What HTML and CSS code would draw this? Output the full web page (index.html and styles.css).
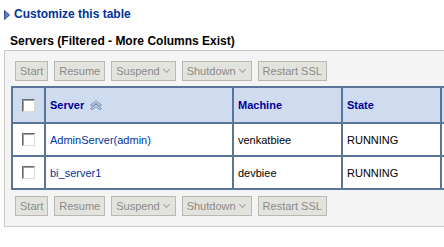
FILE: index.html
```html
<!DOCTYPE html>
<html lang="en">
<head>
  <meta charset="UTF-8" />
  <title>Servers</title>
  <link rel="stylesheet" href="styles.css">
</head>
<body>
  <a class="customize" href="#">
    <svg class="disclose" width="6" height="10" viewBox="0 0 6 10"><path d="M0.5 0.5 L5.5 5 L0.5 9.5 Z" fill="#5b7fc0" stroke="#2d4f91" stroke-width="1"/></svg>
    Customize this table
  </a>

  <h2 class="title">Servers (Filtered - More Columns Exist)</h2>

  <div class="panel">
    <div class="toolbar">
      <span class="btn">Start</span>
      <span class="btn">Resume</span>
      <span class="btn">Suspend <i class="caret"></i></span>
      <span class="btn">Shutdown <i class="caret"></i></span>
      <span class="btn">Restart SSL</span>
    </div>

    <table class="grid">
      <tr class="head">
        <th class="sel"><span class="box"></span></th>
        <th class="c-server">Server
          <svg class="sort" width="14" height="10" viewBox="0 0 14 10"><path d="M1.5 5 L7 0.8 L12.5 5 L11 6.3 L7 3.2 L3 6.3 Z M1.5 8.5 L7 4.3 L12.5 8.5 L11 9.6 L7 6.8 L3 9.6 Z" fill="#c9d7ec" stroke="#5f7ea6" stroke-width="0.8"/></svg>
        </th>
        <th class="c-machine">Machine</th>
        <th class="c-state">State</th>
        <th class="c-more"></th>
      </tr>
      <tr>
        <td class="sel"><span class="box"></span></td>
        <td><a href="#">AdminServer(admin)</a></td>
        <td>venkatbiee</td>
        <td>RUNNING</td>
        <td></td>
      </tr>
      <tr>
        <td class="sel"><span class="box"></span></td>
        <td><a href="#">bi_server1</a></td>
        <td>devbiee</td>
        <td>RUNNING</td>
        <td></td>
      </tr>
    </table>

    <div class="toolbar bottom">
      <span class="btn">Start</span>
      <span class="btn">Resume</span>
      <span class="btn">Suspend <i class="caret"></i></span>
      <span class="btn">Shutdown <i class="caret"></i></span>
      <span class="btn">Restart SSL</span>
    </div>
  </div>
</body>
</html>
```

FILE: styles.css
```css
body { margin: 0; padding: 6px 0 0 4px; background: #fff; font-family: "Liberation Sans", Tahoma, sans-serif; font-size: 11px; overflow: hidden; width: 700px; }
a { color: #003399; text-decoration: none; }

.customize { display: flex; align-items: center; gap: 4px; font-weight: bold; font-size: 12px; color: #003399; height: 16px; }
.disclose { margin-top: 1px; }

.title { margin: 12px 0 0 6px; font-size: 12px; font-weight: bold; color: #000; height: 15px; line-height: 15px; }

.panel { margin-top: 1px; width: 600px; background: #f4f4f4; border: 1px solid #c9c9c9; padding: 10px 0 10px 6px; }

.toolbar { display: flex; gap: 6px; padding-left: 4px; }
.btn { display: flex; align-items: center; gap: 4px; height: 18px; padding: 0 4px; background: #e3e3dd; border: 1px solid #b9b9b3; color: #8a8a8a; font-size: 11px; }
.caret { width: 4px; height: 4px; border-right: 1px solid #a0a0a0; border-bottom: 1px solid #a0a0a0; transform: rotate(45deg); margin: -3px 2px 0 0; }

.grid { border-collapse: collapse; margin: 5px 0 6px 0; border: 2px solid #5a7597; }
.grid th, .grid td { border: 2px solid #5a7597; text-align: left; padding: 0 4px; }
.grid th { background: #cfdcef; color: #000099; font-weight: bold; height: 34px; }
.grid td { background: #fff; height: 31px; color: #000; }
.grid th.sel, .grid td.sel { width: 31px; text-align: center; padding: 0; }
.c-server { width: 178px; }
.c-machine { width: 99px; }
.c-state { width: 89px; }
.c-more { width: 120px; }
.sort { vertical-align: -1px; margin-left: 2px; }

.box { display: inline-block; width: 11px; height: 11px; background: #fff; border: 1px solid; border-color: #6b6b6b #dcdcdc #dcdcdc #6b6b6b; box-shadow: inset 1px 1px 0 #a0a0a0; vertical-align: middle; }
```
